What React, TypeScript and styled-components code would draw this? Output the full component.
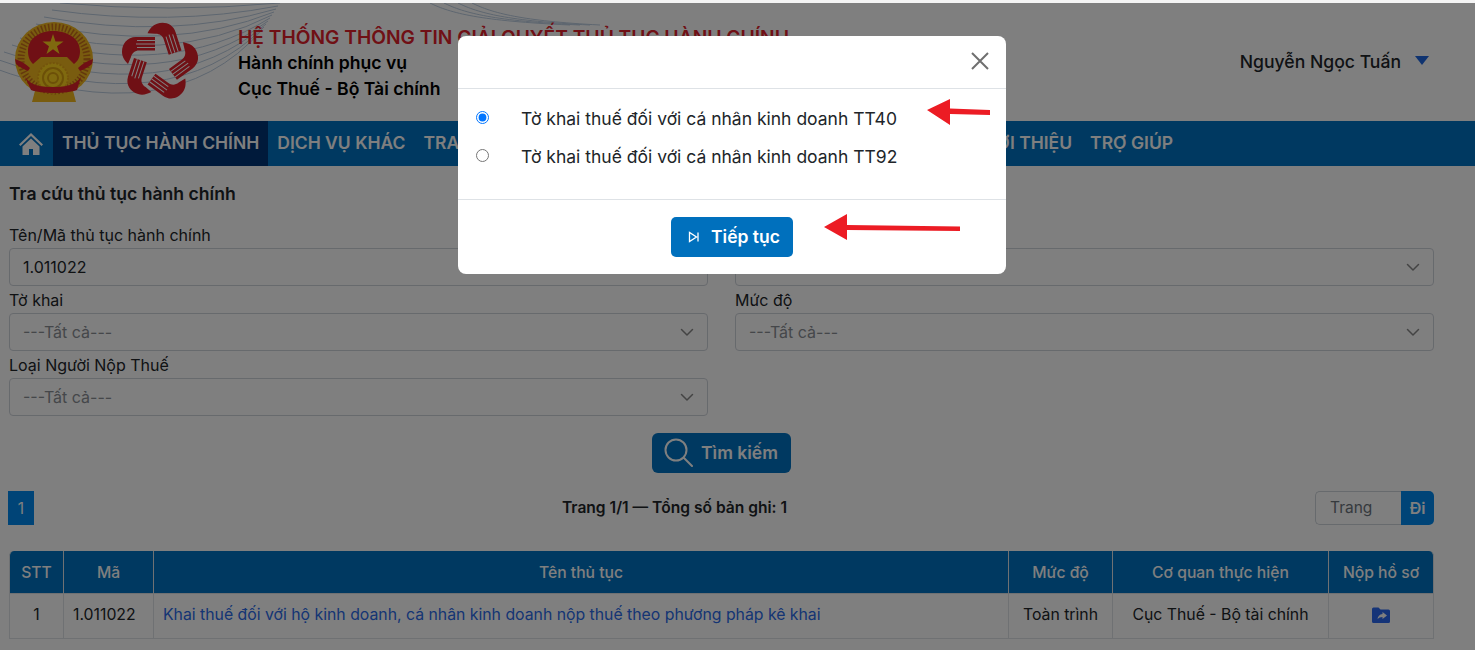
import React from 'react';
import styled, { createGlobalStyle } from 'styled-components';

const GlobalStyle = createGlobalStyle`
  html, body {
    margin: 0;
    padding: 0;
    height: 650px;
    overflow: hidden;
    background: #f4f4f4;
    font-family: Inter, "Noto Sans", "Liberation Sans", sans-serif;
    color: #212529;
  }
  * { box-sizing: border-box; }
`;

const Page = styled.div`
  position: relative;
  height: 650px;
  padding-top: 3px;
  overflow: hidden;
`;

const Sheet = styled.div`
  background: #fff;
  height: 647px;
`;

const Header = styled.header`
  position: relative;
  height: 118px;
  display: flex;
  align-items: flex-start;
  overflow: hidden;
`;

const HeaderLines = styled.svg`
  position: absolute;
  left: 0;
  top: 0;
  width: 600px;
  height: 118px;
`;

const Emblem = styled.svg`
  position: relative;
  width: 82px;
  height: 84px;
  margin: 18px 0 0 13px;
  flex: none;
`;

const HandsLogo = styled.svg`
  position: relative;
  width: 78px;
  height: 84px;
  margin: 18px 0 0 27px;
  flex: none;
`;

const HeaderText = styled.div`
  position: relative;
  margin: 22px 0 0 38px;
  display: flex;
  flex-direction: column;
`;

const SiteTitle = styled.div`
  color: #e0202a;
  font-size: 19.2px;
  line-height: 25px;
  font-weight: 600;
  white-space: nowrap;
`;

const SiteLine = styled.div`
  color: #000;
  font-size: 17.6px;
  line-height: 25.5px;
  font-weight: 600;
  white-space: nowrap;
`;

const UserBox = styled.div`
  position: relative;
  margin: 46px 46px 0 auto;
  display: flex;
  align-items: center;
  gap: 14px;
  font-size: 17.6px;
  font-weight: 500;
  line-height: 26px;
  color: #212529;
`;

const Caret = styled.span`
  width: 0;
  height: 0;
  margin-top: -3px;
  border-left: 7px solid transparent;
  border-right: 7px solid transparent;
  border-top: 9px solid #1f66e0;
`;

const NavBar = styled.nav`
  height: 45px;
  background: #0072c2;
  display: flex;
  align-items: stretch;
`;

const HomeItem = styled.a`
  width: 53px;
  display: flex;
  align-items: center;
  justify-content: center;
  padding-left: 9px;
`;

const NavItem = styled.a<{ $active?: boolean; $width?: number }>`
  display: flex;
  align-items: center;
  padding: 0 9px 2px;
  color: #fff;
  font-size: 17.5px;
  font-weight: 600;
  white-space: nowrap;
  background: ${p => (p.$active ? '#003476' : 'transparent')};
  ${p => (p.$width ? `width: ${p.$width}px;` : '')}
`;

const Content = styled.main`
  padding: 0 41px 0 9px;
`;

const SectionTitle = styled.h2`
  margin: 17px 0 0;
  font-size: 17.6px;
  line-height: 21px;
  font-weight: 600;
  color: #212529;
`;

const FilterGrid = styled.div`
  display: grid;
  grid-template-columns: 699px 699px;
  column-gap: 27px;
  margin-top: 21px;
`;

const Field = styled.div`
  display: flex;
  flex-direction: column;
  height: 65px;
`;

const FieldLabel = styled.label`
  font-size: 16px;
  line-height: 19px;
  height: 19px;
  margin: 1px 0 3px;
  color: #212529;
`;

const SelectBox = styled.div<{ $value?: boolean }>`
  height: 38px;
  flex: none;
  border: 1px solid #ced4da;
  border-radius: 4px;
  padding: 0 13px 0 13px;
  display: flex;
  align-items: center;
  justify-content: space-between;
  font-size: 16px;
  color: ${p => (p.$value ? '#212529' : '#8a8f95')};
`;

const Chevron = styled.svg`
  width: 14px;
  height: 14px;
  flex: none;
`;

const SearchRow = styled.div`
  display: flex;
  justify-content: center;
  margin-top: 13px;
`;

const SearchButton = styled.button`
  width: 139px;
  height: 40px;
  padding: 0 0 1px 12px;
  display: flex;
  align-items: center;
  gap: 8px;
  border: 0;
  border-radius: 6px;
  background: #0072c2;
  color: #fff;
  font: 600 17.5px Inter, sans-serif;
`;

const PagerRow = styled.div`
  display: flex;
  align-items: center;
  justify-content: space-between;
  margin: 18px 0 0 -1px;
  height: 34px;
`;

const PageNumber = styled.span`
  width: 26px;
  height: 34px;
  display: flex;
  align-items: center;
  justify-content: center;
  background: #0088ee;
  color: #fff;
  font-size: 15.5px;
`;

const PagerInfo = styled.span`
  font-size: 15.6px;
  font-weight: 600;
  color: #212529;
  margin-top: -2px;
`;

const PageJump = styled.div`
  display: flex;
  height: 34px;
  width: 119px;
`;

const PageInput = styled.span`
  flex: 1;
  display: flex;
  align-items: center;
  padding: 0 0 1px 14px;
  border: 1px solid #ced4da;
  border-right: 0;
  border-radius: 5px 0 0 5px;
  font-size: 15.5px;
  color: #6c757d;
`;

const PageGo = styled.span`
  width: 33px;
  display: flex;
  align-items: center;
  justify-content: center;
  padding-bottom: 1px;
  background: #0088ee;
  color: #fff;
  font-size: 16px;
  font-weight: 600;
  border-radius: 0 5px 5px 0;
`;

const TableWrap = styled.div`
  margin-top: 26px;
  width: 1425px;
`;

const Table = styled.table`
  width: 100%;
  table-layout: fixed;
  border-collapse: separate;
  border-spacing: 0;
  font-size: 15.8px;
`;

const HeadCell = styled.th<{ $width?: number }>`
  ${p => (p.$width ? `width: ${p.$width}px;` : '')}
  height: 43px;
  padding: 0;
  background: #0072c2;
  color: #fff;
  font-weight: 500;
  font-size: 15.7px;
  text-align: center;
  border-right: 1px solid #dee2e6;
  border-bottom: 1px solid #dee2e6;
  &:first-child { border-left: 1px solid #dee2e6; border-top-left-radius: 5px; }
  &:last-child { border-top-right-radius: 5px; }
`;

const BodyCell = styled.td<{ $left?: boolean }>`
  height: 45px;
  padding: 0 ${p => (p.$left ? '9px' : '0')} 3px;
  text-align: ${p => (p.$left ? 'left' : 'center')};
  color: #212529;
  border-right: 1px solid #dee2e6;
  border-bottom: 1px solid #dee2e6;
  white-space: nowrap;
  &:first-child { border-left: 1px solid #dee2e6; }
`;

const TableLink = styled.a`
  color: #2a6ae8;
`;

const FolderIcon = styled.svg`
  width: 18px;
  height: 17px;
  vertical-align: middle;
`;

const Backdrop = styled.div`
  position: absolute;
  top: 3px;
  left: 0;
  right: 0;
  bottom: 0;
  background: rgba(0, 0, 0, 0.5);
  display: flex;
  justify-content: center;
  align-items: flex-start;
  padding: 33px 11px 0 0;
`;

const Modal = styled.div`
  position: relative;
  width: 548px;
  height: 238px;
  background: #fff;
  border-radius: 8px;
  display: flex;
  flex-direction: column;
  overflow: hidden;
`;

const ModalHead = styled.div`
  height: 53px;
  flex: none;
  display: flex;
  align-items: center;
  justify-content: flex-end;
  padding: 0 16px 3px 0;
  border-bottom: 1px solid #dee2e6;
`;

const CloseIcon = styled.svg`
  width: 20px;
  height: 20px;
`;

const ModalBody = styled.div`
  height: 111px;
  flex: none;
  padding: 10px 0 0 18px;
  border-bottom: 1px solid #dee2e6;
`;

const OptionRow = styled.label`
  display: flex;
  align-items: center;
  height: 38px;
  font-size: 17.5px;
  color: #212529;
`;

const OptionRadio = styled.input`
  width: 13px;
  height: 13px;
  margin: 0 32px 0 0;
  flex: none;
  position: relative;
  top: -1px;
`;

const ModalFoot = styled.div`
  flex: 1;
  display: flex;
  justify-content: center;
  align-items: flex-start;
  padding: 17px 0 0 0;
`;

const ContinueButton = styled.button`
  width: 122px;
  height: 40px;
  display: flex;
  align-items: center;
  gap: 11px;
  padding: 0 0 1px 17px;
  border: 0;
  border-radius: 5px;
  background: #0070bd;
  color: #fff;
  font: 600 17.5px Inter, sans-serif;
`;

const SkipIcon = styled.svg`
  width: 12px;
  height: 12px;
  flex: none;
`;

const Arrow = styled.svg<{ $left: number; $top: number }>`
  position: absolute;
  left: ${p => p.$left}px;
  top: ${p => p.$top}px;
`;

const ChevronDown = () => (
  <Chevron viewBox="0 0 14 14" fill="none" stroke="#888" strokeWidth="1.5" strokeLinecap="round" strokeLinejoin="round">
    <path d="M1.500 4.500 7 10l5.500-5.500" />
  </Chevron>
);

const Filter = ({ label, value }: { label: string; value?: string }) => (
  <Field>
    <FieldLabel>{label}</FieldLabel>
    <SelectBox $value={!!value}>
      {value || '---Tất cả---'}
      {!value && <ChevronDown />}
    </SelectBox>
  </Field>
);

const HAND = 'M33 16 L14 16 C5 16 0 23 0 31 C0 36 3 40 6 43 L9 36 C10 32 13 29.500 17 29.500 L33 29.500 Z';

const Hands = () => (
  <HandsLogo viewBox="0 0 78 84">
    {[0, 72, 144, 216, 288].map(a => (
      <g key={a} transform={`rotate(${a} 37 41)`}>
        <path d={HAND} fill="#e0202a" />
        <path d="M15 19.500H33M14 23H33M15 26.500H33" stroke="#fff" strokeWidth="1" />
      </g>
    ))}
  </HandsLogo>
);

const NationalEmblem = () => (
  <Emblem viewBox="0 0 82 84">
    <path d="M23 66 L19 81 H63 L59 66 Z" fill="#f2b81e" />
    <ellipse cx="41" cy="38" rx="39" ry="37" fill="#f2b81e" />
    <ellipse cx="41" cy="38" rx="33" ry="32" fill="none" stroke="#c8701a" strokeWidth="7" strokeDasharray="1.500 2" />
    <path d="M15 30 C15 17 27 10 40 10 C54 10 67 17 67 30 C67 36 65 40 61 43 L54 36 L28 36 L20 43 C17 40 15 36 15 30 Z" fill="#e0202a" />
    <path d="M40 13 42.500 20.600 50.500 20.600 44 25.300 46.500 32.900 40 28.200 33.500 32.900 36 25.300 29.500 20.600 37.500 20.600Z" fill="#ffd21e" />
    <path d="M2 38 C8 40 13 43 17 47 L15 50 C10 48 5 45 3 43 Z M80 38 C74 40 69 43 65 47 L67 50 C72 48 77 45 79 43 Z" fill="#e0202a" />
    <circle cx="40" cy="57" r="15" fill="#ffd21e" stroke="#e8a818" strokeWidth="2" strokeDasharray="2 1.500" />
    <circle cx="40" cy="57" r="10" fill="none" stroke="#d8a010" strokeWidth="2" />
    <circle cx="40" cy="57" r="5" fill="none" stroke="#d8a010" strokeWidth="2" />
    <path d="M12 56 C18 64 26 66 40 66 C54 66 62 64 68 56 L64 69 C54 73 28 73 18 69 Z" fill="#e0202a" />
  </Emblem>
);

const App: React.FC = () => (
  <>
    <GlobalStyle />
    <Page>
      <Sheet>
        <Header>
          <HeaderLines viewBox="0 0 600 118" fill="none" stroke="#bccde0" strokeWidth="1">
            {[0, 1, 2, 3, 4, 5, 6, 7, 8, 9].map(i => (
              <path key={i} d={`M${60 - i * 8} ${i * 7} Q 170 ${10 + i * 13.5} ${280 - i * 2} ${i * 3}`} />
            ))}
            {[0, 1, 2, 3].map(i => (
              <path key={i} d={`M${430 + i * 14} 0 C ${450 + i * 14} 10, ${480 + i * 14} 18, ${570 + i * 10} 22`} />
            ))}
          </HeaderLines>
          <NationalEmblem />
          <Hands />
          <HeaderText>
            <SiteTitle>HỆ THỐNG THÔNG TIN GIẢI QUYẾT THỦ TỤC HÀNH CHÍNH</SiteTitle>
            <SiteLine>Hành chính phục vụ</SiteLine>
            <SiteLine>Cục Thuế - Bộ Tài chính</SiteLine>
          </HeaderText>
          <UserBox>
            Nguyễn Ngọc Tuấn
            <Caret />
          </UserBox>
        </Header>
        <NavBar>
          <HomeItem>
            <svg width="24" height="22" viewBox="0 0 24 22" fill="#fff">
              <path d="M12 0 0 11.500l1.500 1.600L12 3l10.500 10.100 1.500-1.600Z" />
              <path d="M12 5.500 3.500 13.600V22H10v-6h4v6h6.500v-8.400Z" />
            </svg>
          </HomeItem>
          <NavItem $active>THỦ TỤC HÀNH CHÍNH</NavItem>
          <NavItem>DỊCH VỤ KHÁC</NavItem>
          <NavItem $width={555}>TRA CỨU HỒ SƠ</NavItem>
          <NavItem>GIỚI THIỆU</NavItem>
          <NavItem>TRỢ GIÚP</NavItem>
        </NavBar>
        <Content>
          <SectionTitle>Tra cứu thủ tục hành chính</SectionTitle>
          <FilterGrid>
            <Filter label="Tên/Mã thủ tục hành chính" value="1.011022" />
            <Filter label="Lĩnh vực" />
            <Filter label="Tờ khai" />
            <Filter label="Mức độ" />
            <Filter label="Loại Người Nộp Thuế" />
          </FilterGrid>
          <SearchRow>
            <SearchButton>
              <svg width="29" height="29" viewBox="0 0 29 29" fill="none" stroke="#fff" strokeWidth="2" strokeLinecap="round">
                <circle cx="12" cy="12" r="10.500" />
                <path d="m20 20 8 8" />
              </svg>
              Tìm kiếm
            </SearchButton>
          </SearchRow>
          <PagerRow>
            <PageNumber>1</PageNumber>
            <PagerInfo>Trang 1/1 — Tổng số bản ghi: 1</PagerInfo>
            <PageJump>
              <PageInput>Trang</PageInput>
              <PageGo>Đi</PageGo>
            </PageJump>
          </PagerRow>
          <TableWrap>
            <Table>
              <thead>
                <tr>
                  <HeadCell $width={55}>STT</HeadCell>
                  <HeadCell $width={90}>Mã</HeadCell>
                  <HeadCell>Tên thủ tục</HeadCell>
                  <HeadCell $width={104}>Mức độ</HeadCell>
                  <HeadCell $width={216}>Cơ quan thực hiện</HeadCell>
                  <HeadCell $width={105}>Nộp hồ sơ</HeadCell>
                </tr>
              </thead>
              <tbody>
                <tr>
                  <BodyCell>1</BodyCell>
                  <BodyCell $left>1.011022</BodyCell>
                  <BodyCell $left>
                    <TableLink>Khai thuế đối với hộ kinh doanh, cá nhân kinh doanh nộp thuế theo phương pháp kê khai</TableLink>
                  </BodyCell>
                  <BodyCell>Toàn trình</BodyCell>
                  <BodyCell>Cục Thuế - Bộ tài chính</BodyCell>
                  <BodyCell>
                    <FolderIcon viewBox="0 0 18 16">
                      <path d="M1.500 0h5l2 2h8a1.500 1.500 0 0 1 1.500 1.500v10.500a1.500 1.500 0 0 1-1.500 1.500h-15A1.500 1.500 0 0 1 0 14V1.500A1.500 1.500 0 0 1 1.500 0Z" fill="#2a68f0" />
                      <path d="M10.500 4.500 15 8l-4.500 3.500V9.500c-2.200 0-3.700.7-5 2.200.3-2.800 2-4.900 5-5.200Z" fill="#fff" />
                    </FolderIcon>
                  </BodyCell>
                </tr>
              </tbody>
            </Table>
          </TableWrap>
        </Content>
      </Sheet>
      <Backdrop>
        <Modal>
          <ModalHead>
            <CloseIcon viewBox="0 0 20 20" fill="none" stroke="#6f6f6f" strokeWidth="2">
              <path d="M2 2l16 16M18 2 2 18" />
            </CloseIcon>
          </ModalHead>
          <ModalBody>
            <OptionRow>
              <OptionRadio type="radio" name="form" defaultChecked />
              Tờ khai thuế đối với cá nhân kinh doanh TT40
            </OptionRow>
            <OptionRow>
              <OptionRadio type="radio" name="form" />
              Tờ khai thuế đối với cá nhân kinh doanh TT92
            </OptionRow>
          </ModalBody>
          <ModalFoot>
            <ContinueButton>
              <SkipIcon viewBox="0 0 12 12" fill="none" stroke="#fff" strokeWidth="1.3">
                <path d="M1.500 1.500v9L8.500 6ZM10 1.500v9" />
              </SkipIcon>
              Tiếp tục
            </ContinueButton>
          </ModalFoot>
          <Arrow $left={468} $top={62} width="66" height="28" viewBox="0 0 66 28">
            <path d="M1 12 24 1v9.500l40 1.500v5L24 16v11Z" fill="#ec1c24" />
          </Arrow>
          <Arrow $left={365} $top={177} width="140" height="28" viewBox="0 0 140 28">
            <path d="M1 14 24 1v11l113 1.500v4.500L24 17v10Z" fill="#ec1c24" />
          </Arrow>
        </Modal>
      </Backdrop>
    </Page>
  </>
);

export default App;
